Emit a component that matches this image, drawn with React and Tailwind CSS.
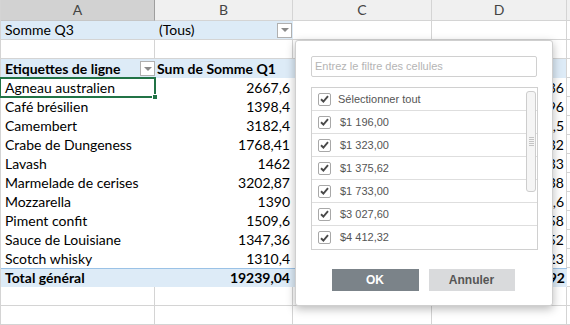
import React from "react";

const labels = [
  "Agneau australien",
  "Café brésilien",
  "Camembert",
  "Crabe de Dungeness",
  "Lavash",
  "Marmelade de cerises",
  "Mozzarella",
  "Piment confit",
  "Sauce de Louisiane",
  "Scotch whisky",
];
const colB = ["2667,6", "1398,4", "3182,4", "1768,41", "1462", "3202,87", "1390", "1509,6", "1347,36", "1310,4"];
const colD = ["3021,36", "2173,96", "1563,5", "2893,32", "1798,33", "2474,38", "1870,6", "1654,58", "1802,52", "2456,23"];

const items = ["$1 196,00", "$1 323,00", "$1 375,62", "$1 733,00", "$3 027,60", "$4 412,32"];

function Check() {
  return (
    <div className="w-[13px] h-[13px] border border-[#a8a8a8] rounded-[2px] bg-white flex items-center justify-center shrink-0">
      <svg width="9" height="8" viewBox="0 0 9 8">
        <path d="M1 4.2 L3.4 6.5 L8 1.2" fill="none" stroke="#4a4a4a" strokeWidth="1.9" />
      </svg>
    </div>
  );
}

function FilterBtn() {
  return (
    <div className="w-[15px] h-[15px] bg-white border border-[#b0b0b0] flex items-center justify-center">
      <div className="w-0 h-0 border-l-[4px] border-r-[4px] border-t-[4px] border-l-transparent border-r-transparent border-t-[#8a8a8a]" />
    </div>
  );
}

const grid = "grid grid-cols-[154px_138px_139px_135px_1fr]";
const g = "border-[#d4d4d4]";

export default function App() {
  return (
    <div className="relative w-[570px] h-[325px] overflow-hidden bg-white font-['Lato',sans-serif] text-[14px] text-black">
      <div className={`border-l ${g}`}>
        {/* column headers */}
        <div className={`${grid} h-[21px] text-[#444] text-[14px] leading-[20px]`}>
          <div className="bg-[#d2d2d2] border-r border-b border-r-[#9e9e9e] border-b-[#c6c6c6] text-center">A</div>
          <div className={`bg-[#f0f0f0] border-r border-b ${g} text-center`}>B</div>
          <div className={`bg-[#f0f0f0] border-r border-b ${g} text-center`}>C</div>
          <div className={`bg-[#f0f0f0] border-r border-b ${g} text-center`}>D</div>
          <div className={`bg-[#f0f0f0] border-b ${g}`}></div>
        </div>

        {/* row 1: filter */}
        <div className={`${grid} h-[19px] leading-[18px]`}>
          <div className="bg-[#ddebf7] border-b border-b-[#d4d4d4] pl-[4px]">Somme Q3</div>
          <div className="bg-[#ddebf7] border-b border-b-[#d4d4d4] pl-[4px] flex items-center justify-between pr-[1px]">
            <span>(Tous)</span>
            <FilterBtn />
          </div>
          <div className={`border-r border-b ${g}`}></div>
          <div className={`border-r border-b ${g}`}></div>
          <div className={`border-b ${g}`}></div>
        </div>

        {/* row 2: empty */}
        <div className={`${grid} h-[19px]`}>
          <div className={`border-r border-b ${g}`}></div>
          <div className={`border-r border-b ${g}`}></div>
          <div className={`border-r border-b ${g}`}></div>
          <div className={`border-r border-b ${g}`}></div>
          <div className={`border-b ${g}`}></div>
        </div>

        {/* row 3: pivot header */}
        <div className={`${grid} h-[19px] leading-[19px] font-bold`}>
          <div className="bg-[#ddebf7] pl-[4px] flex items-center justify-between">
            <span>Etiquettes de ligne</span>
            <FilterBtn />
          </div>
          <div className="bg-[#ddebf7] pl-[2px]">Sum de Somme Q1</div>
          <div className="bg-[#ddebf7]"></div>
          <div className={`bg-[#ddebf7] border-r ${g}`}></div>
          <div className={`border-b ${g}`}></div>
        </div>

        {/* data rows */}
        {labels.map((l, i) => (
          <div key={l} className={`${grid} h-[19px] leading-[19px]`}>
            <div className="relative pl-[4px] whitespace-nowrap">
              {l}
              {i === 0 && (
                <>
                  <div className="absolute -top-px -left-[2px] -right-px -bottom-px border-2 border-[#217346]" />
                  <div className="absolute -right-[3px] -bottom-[3px] w-[6px] h-[6px] bg-[#217346] border border-white" />
                </>
              )}
            </div>
            <div className="text-right pr-[3px]">{colB[i]}</div>
            <div></div>
            <div className={`text-right pr-[2px] border-r ${g}`}>{colD[i]}</div>
            <div className={`border-b ${g}`}></div>
          </div>
        ))}

        {/* total row */}
        <div className={`${grid} h-[19px] leading-[18px] font-bold`}>
          <div className="bg-[#ddebf7] border-t border-[#9bc2e6] pl-[4px]">Total général</div>
          <div className="bg-[#ddebf7] border-t border-[#9bc2e6] text-right pr-[3px]">19239,04</div>
          <div className="bg-[#ddebf7] border-t border-[#9bc2e6]"></div>
          <div className="bg-[#ddebf7] border-t border-[#9bc2e6] text-right pr-[2px]">21708,92</div>
          <div className={`border-b ${g}`}></div>
        </div>

        {/* empty rows */}
        {[0, 1].map((k) => (
          <div key={k} className={`${grid} h-[19px]`}>
            <div className={`border-r border-b ${g}`}></div>
            <div className={`border-r border-b ${g}`}></div>
            <div className={`border-r border-b ${g}`}></div>
            <div className={`border-r border-b ${g}`}></div>
            <div className={`border-b ${g}`}></div>
          </div>
        ))}
      </div>

      {/* filter popup */}
      <div className="absolute left-[295px] top-[40px] w-[258px] h-[266px] bg-white border border-[#cfcfcf] rounded-[3px] shadow-[0_3px_10px_rgba(0,0,0,0.28)] font-['Liberation_Sans',Arial,sans-serif] text-[11px] text-[#555]">
        <div className="pt-[15px] px-[15px]">
          <div className="h-[21px] border border-[#d0d0d0] rounded-[2px] pl-[3px] flex items-center text-[#b4b4b4]">
            Entrez le filtre des cellules
          </div>
          <div className="relative mt-[10px] w-[227px] border border-[#d0d0d0]">
            <div className="flex items-center h-[23px] pl-[6px] gap-[7px] border-b border-[#dedede]">
              <Check />
              <span>Sélectionner tout</span>
            </div>
            {items.map((it, i) => (
              <div
                key={it}
                className={`flex items-center h-[23px] pl-[6px] gap-[9px] ${i < items.length - 1 ? "border-b border-[#dedede]" : ""}`}
              >
                <Check />
                <span>{it}</span>
              </div>
            ))}
            <div className="absolute right-[1px] top-[3px] w-[10px] h-[101px] bg-[#f5f5f5] border border-[#cdcdcd] rounded-[3px] flex flex-col items-center justify-center gap-[1px]">
              {[0, 1, 2, 3, 4].map((k) => (
                <div key={k} className="w-[5px] h-px bg-[#c4c4c4]" />
              ))}
            </div>
          </div>
          <div className="flex justify-center gap-[10px] mt-[19px] pr-[2px]">
            <div className="w-[87px] h-[22px] bg-[#7b8389] text-white font-bold text-[12px] flex items-center justify-center">
              OK
            </div>
            <div className="w-[86px] h-[22px] bg-[#d9dadc] text-[#555] font-bold text-[12px] flex items-center justify-center">
              Annuler
            </div>
          </div>
        </div>
      </div>
    </div>
  );
}
